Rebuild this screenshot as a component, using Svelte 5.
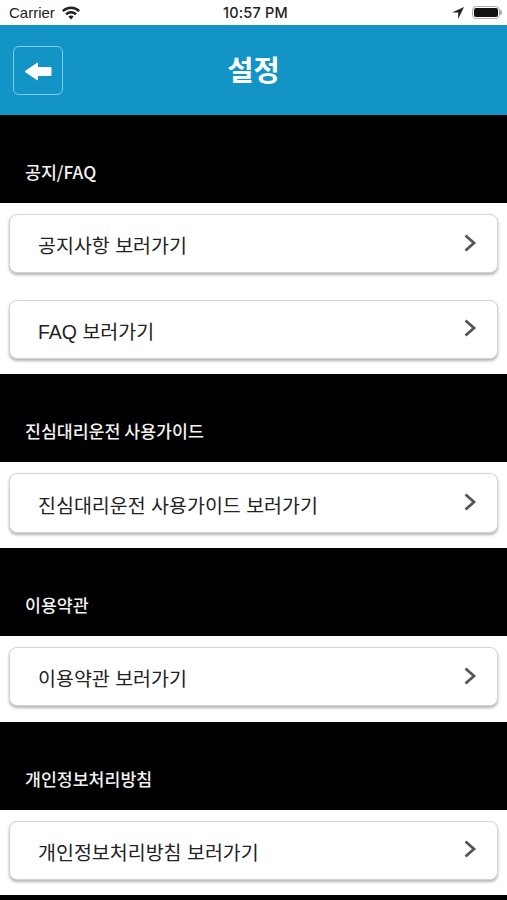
<script>
  const sections = [
    { title: '공지/FAQ', items: ['공지사항 보러가기', 'FAQ 보러가기'] },
    { title: '진심대리운전 사용가이드', items: ['진심대리운전 사용가이드 보러가기'] },
    { title: '이용약관', items: ['이용약관 보러가기'] },
    { title: '개인정보처리방침', items: ['개인정보처리방침 보러가기'] }
  ];
</script>

<div class="screen">
  <div class="status-bar">
    <div class="status-left">
      <span>Carrier</span>
      <svg width="20" height="15" viewBox="0 0 20 15" aria-hidden="true">
        <path d="M1 5.2a13 13 0 0 1 18 0l-1.7 1.8a10.6 10.6 0 0 0-14.6 0z" fill="#222" />
        <path d="M4.2 8.4a8.5 8.5 0 0 1 11.6 0l-1.7 1.8a6 6 0 0 0-8.2 0z" fill="#222" />
        <path d="M7.4 11.6a3.9 3.9 0 0 1 5.2 0L10 14.4z" fill="#222" />
      </svg>
    </div>
    <span class="status-time">10:57 PM</span>
    <div class="status-right">
      <svg width="14" height="14" viewBox="0 0 14 14" aria-hidden="true">
        <path d="M13 1 1 6.6h6.2V13z" fill="#222" />
      </svg>
      <div class="battery"><div class="battery-fill"></div></div>
      <div class="battery-tip"></div>
    </div>
  </div>

  <header class="header">
    <button class="back-btn" aria-label="Back">
      <svg width="28" height="20" viewBox="0 0 28 20" aria-hidden="true">
        <path d="M1 10.500 13.500 2V6.500H27V14.500H13.500V19z" fill="#fff" stroke="#fff" stroke-linejoin="round" />
      </svg>
    </button>
    <h1 class="title">설정</h1>
  </header>

  {#each sections as section}
    <div class="section-head">{section.title}</div>
    <div class="section-body">
      {#each section.items as item}
        <button class="row">
          <span>{item}</span>
          <svg class="chevron" width="14" height="20" viewBox="0 0 14 20" aria-hidden="true">
            <path d="M2.500 2.500 11 10 2.500 17.500" fill="none" stroke="#555" stroke-width="2.800" />
          </svg>
        </button>
      {/each}
    </div>
  {/each}
  <div class="tail"></div>
</div>

<style>
  :global(body) {
    margin: 0;
    background: #fff;
  }

  .screen {
    width: 507px;
    height: 900px;
    overflow: hidden;
    display: flex;
    flex-direction: column;
    font-family: "Liberation Sans", "Noto Sans CJK KR", sans-serif;
  }

  .status-bar {
    height: 25px;
    flex-shrink: 0;
    display: grid;
    grid-template-columns: 1fr auto 1fr;
    align-items: center;
    padding: 0 5px 0 9px;
    background: #fff;
    color: #222;
    font-size: 15px;
  }

  .status-left {
    display: flex;
    align-items: center;
    gap: 6px;
  }

  .status-time {
    font-family: Inter, "Liberation Sans", sans-serif;
    font-size: 14.500px;
    font-weight: 500;
    letter-spacing: 0.2px;
  }

  .status-right {
    display: flex;
    align-items: center;
    justify-content: flex-end;
  }

  .battery {
    box-sizing: border-box;
    width: 28px;
    height: 13px;
    margin-left: 7px;
    padding: 1px;
    border: 1.500px solid #aaa;
    border-radius: 4px;
  }

  .battery-fill {
    height: 100%;
    background: #111;
    border-radius: 2px;
  }

  .battery-tip {
    width: 2px;
    height: 5px;
    background: #aaa;
    border-radius: 0 2px 2px 0;
  }

  .header {
    height: 90px;
    flex-shrink: 0;
    position: relative;
    display: flex;
    align-items: center;
    justify-content: center;
    background: #1295c6;
  }

  .back-btn {
    position: absolute;
    left: 13px;
    top: 21px;
    width: 50px;
    height: 49px;
    display: flex;
    align-items: center;
    justify-content: center;
    padding: 0;
    background: none;
    border: 1.500px solid #7fcbe8;
    border-radius: 6px;
  }

  .title {
    margin: 0 0 3px;
    color: #fff;
    font-size: 28.500px;
    font-weight: 700;
  }

  .section-head {
    height: 88px;
    flex-shrink: 0;
    box-sizing: border-box;
    display: flex;
    align-items: flex-end;
    padding: 0 0 20px 25px;
    background: #000;
    color: #f2f2f2;
    font-family: "Noto Sans CJK KR", "Liberation Sans", sans-serif;
    font-size: 17.300px;
    font-weight: 500;
    line-height: 22px;
  }

  .section-body {
    flex-shrink: 0;
    display: flex;
    flex-direction: column;
    gap: 26.500px;
    padding: 11px 9px 15.300px;
    background: #fff;
  }

  .row {
    height: 59.300px;
    flex-shrink: 0;
    display: flex;
    align-items: center;
    justify-content: space-between;
    padding: 2px 20px 0 28px;
    background: #fff;
    border: 1px solid #d4d4d4;
    border-radius: 8px;
    box-shadow: 0 2px 3px rgba(0, 0, 0, 0.3);
    color: #222;
    font-family: inherit;
    font-size: 19.500px;
  }

  .chevron {
    margin-top: -4px;
  }

  .tail {
    flex: 1;
    background: #000;
  }
</style>
